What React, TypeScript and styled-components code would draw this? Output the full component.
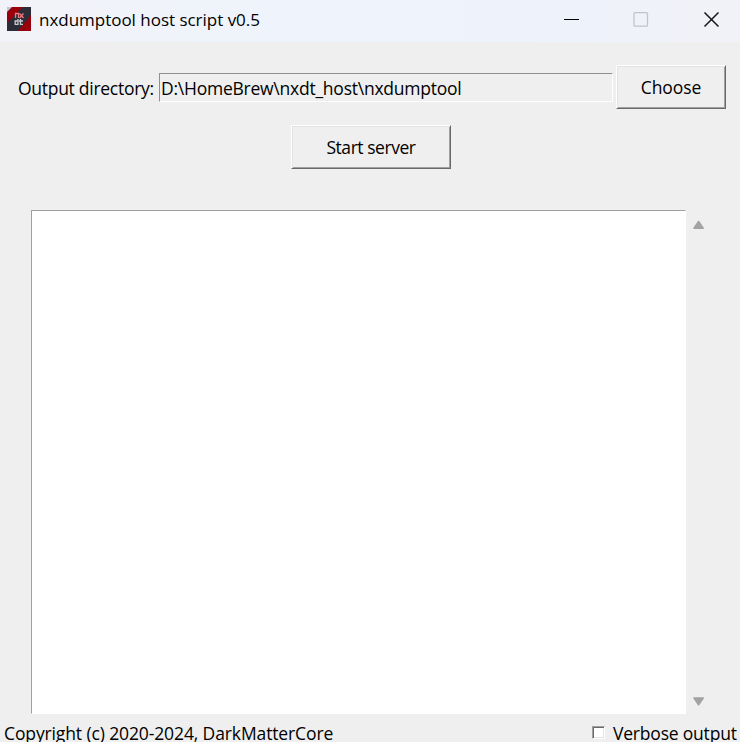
import React from "react";
import styled, { createGlobalStyle } from "styled-components";

const GlobalStyle = createGlobalStyle`
  * { box-sizing: border-box; }
  html, body { margin: 0; padding: 0; overflow: hidden; }
`;

const Window = styled.div`
  width: 740px;
  height: 742px;
  display: flex;
  flex-direction: column;
  overflow: hidden;
  background: #efefef;
  color: #000;
  font-family: "Open Sans", "Noto Sans", sans-serif;
  font-size: 17.5px;
  line-height: 24px;
  white-space: nowrap;
`;

const TitleBar = styled.header`
  height: 42px;
  flex: none;
  display: flex;
  align-items: flex-start;
  padding: 7px 0 0 7px;
  background: linear-gradient(90deg, #f2f3f8 0%, #eff3fb 35%, #eef2fb 75%, #f1f2f7 100%);
`;

const Text = styled.span<{ $spacing: number }>`
  letter-spacing: ${(p) => p.$spacing}px;
`;

const Title = styled.div`
  flex: 1;
  margin-left: 8px;
  padding-top: 1px;
  font-size: 17px;
`;

const Controls = styled.div`
  display: flex;
  gap: 54px;
  padding: 5px 21px 0 0;
`;

const ControlIcon = styled.svg`
  display: block;
  width: 16px;
  height: 16px;
`;

const DirectoryRow = styled.div`
  display: flex;
  align-items: center;
  height: 44px;
  margin-top: 23px;
  padding-left: 18px;
`;

const Label = styled.label`
  width: 141px;
  padding-top: 2px;
`;

const PathField = styled.div`
  width: 454px;
  height: 29px;
  margin-right: 3px;
  padding: 2px 0 0 1px;
  border: 1px solid;
  border-color: #909090 #fff #fff #909090;
`;

const Button = styled.button<{ $width: number }>`
  width: ${(p) => p.$width}px;
  height: 44px;
  padding: 0 0 1px;
  border: 1px solid;
  border-color: #fff #696969 #696969 #fff;
  box-shadow: inset 1px 1px #e3e3e3, inset -1px -1px #a0a0a0;
  background: #efefef;
  color: #000;
  font: inherit;
`;

const ServerRow = styled.div`
  display: flex;
  margin: 16px 0 0 291px;
`;

const LogArea = styled.div`
  display: flex;
  height: 504px;
  margin: 41px 0 0 31px;
`;

const LogBox = styled.div`
  width: 655px;
  background: #fff;
  border: 1px solid;
  border-color: #a0a0a0 #fff #fff #a0a0a0;
`;

const Scrollbar = styled.div`
  display: flex;
  flex-direction: column;
  justify-content: space-between;
  padding: 10px 0 8px 7px;
`;

const Arrow = styled.svg`
  display: block;
  width: 12px;
  height: 10px;
`;

const Footer = styled.footer`
  display: flex;
  align-items: flex-start;
  height: 28px;
  padding: 7px 0 0 4px;
`;

const Copyright = styled.div`
  width: 588px;
`;

const CheckBox = styled.span`
  width: 13px;
  height: 13px;
  margin: 5px 8px 0 0;
  background: #fff;
  border: 1px solid;
  border-color: #a0a0a0 #fff #fff #a0a0a0;
  box-shadow: inset 1px 1px #696969, inset -1px -1px #e3e3e3;
`;

const Logo = styled.svg`
  display: block;
  width: 24px;
  height: 24px;
`;

const App = () => (
  <>
    <GlobalStyle />
    <Window>
      <TitleBar>
        <Logo viewBox="0 0 24 24">
          <rect width="24" height="24" fill="#2c2d38" />
          <path d="M5 0H16L0 16V5Z" fill="#98000c" />
          <path d="M0 0H5L0 5Z" fill="#c6c6cb" />
          <path d="M24 8V24H11Z" fill="#98000c" />
          <g fill="none" strokeWidth="1.3">
            <path d="M8.5 11V6.5H11.5V11M12.5 6.5L16.5 11M16.5 6.5L12.5 11" stroke="#f0777c" />
            <path d="M11 12V17.3H8.2V14H11M13.5 12V17.3H16M12 14H16" stroke="#c9cbd0" />
          </g>
        </Logo>
        <Title><Text $spacing={-0.02}>nxdumptool host script v0.5</Text></Title>
        <Controls>
          <ControlIcon viewBox="0 0 16 16"><path d="M1 7.5H16" stroke="#000" /></ControlIcon>
          <ControlIcon viewBox="0 0 16 16"><rect x="1" y="0.7" width="13.5" height="13.5" rx="1" fill="none" stroke="#c2c3c8" strokeWidth="1.3" /></ControlIcon>
          <ControlIcon viewBox="0 0 16 16"><path d="M1.5 0.5L15.5 14.5M15.5 0.5L1.5 14.5" stroke="#16171b" strokeWidth="1.5" /></ControlIcon>
        </Controls>
      </TitleBar>
      <DirectoryRow>
        <Label><Text $spacing={-0.28}>Output directory:</Text></Label>
        <PathField><Text $spacing={-0.24}>D:\HomeBrew\nxdt_host\nxdumptool</Text></PathField>
        <Button $width={110}><Text $spacing={-0.08}>Choose</Text></Button>
      </DirectoryRow>
      <ServerRow>
        <Button $width={160}><Text $spacing={-0.45}>Start server</Text></Button>
      </ServerRow>
      <LogArea>
        <LogBox />
        <Scrollbar>
          <Arrow viewBox="0 0 12 10"><path d="M1 8.2L5.6 1.5L10.2 8.2Z" fill="#a3a3a3" stroke="#a3a3a3" strokeWidth="1.6" strokeLinejoin="round" /></Arrow>
          <Arrow viewBox="0 0 12 10"><path d="M1 2L5.6 8.7L10.2 2Z" fill="#a3a3a3" stroke="#a3a3a3" strokeWidth="1.6" strokeLinejoin="round" /></Arrow>
        </Scrollbar>
      </LogArea>
      <Footer>
        <Copyright><Text $spacing={-0.12}>Copyright (c) 2020-2024, DarkMatterCore</Text></Copyright>
        <CheckBox />
        <Text $spacing={-0.2}>Verbose output</Text>
      </Footer>
    </Window>
  </>
);

export default App;
